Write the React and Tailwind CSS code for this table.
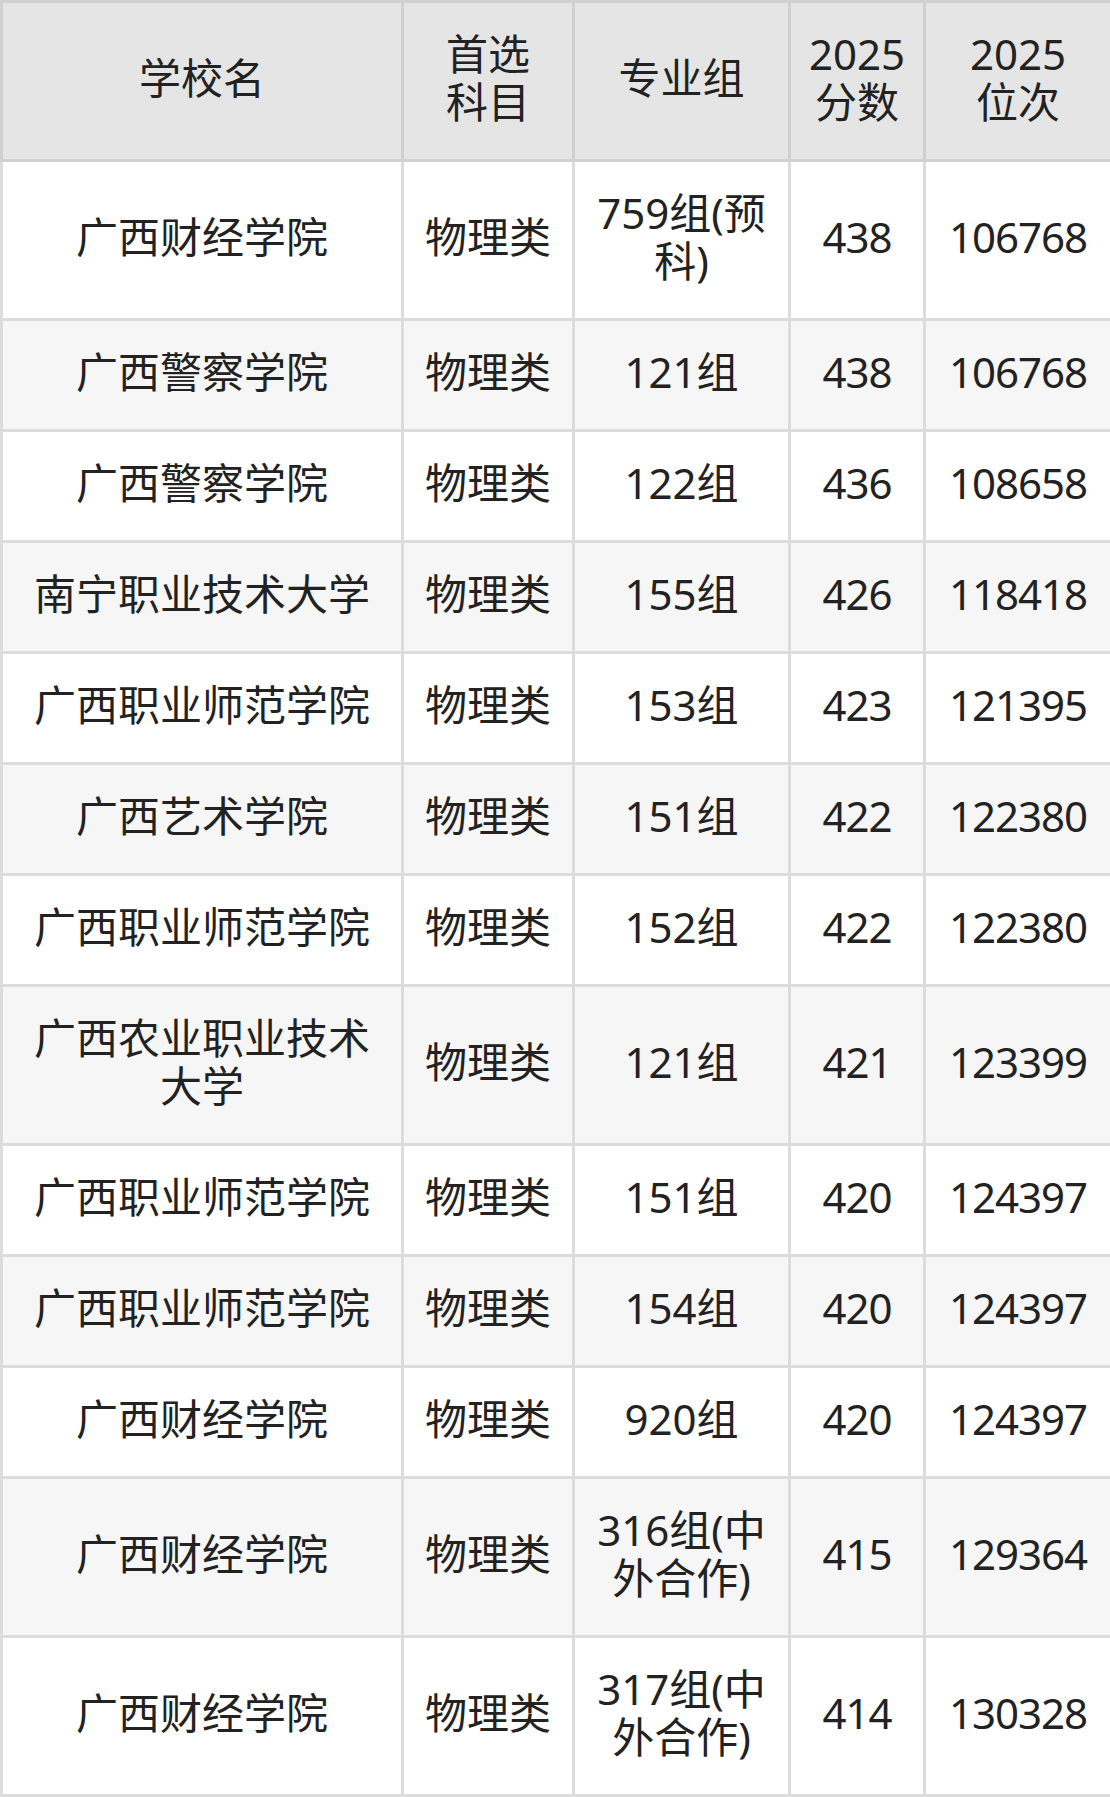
import React from 'react';

const rows = [
  ['广西财经学院', '物理类', '759组(预科)', '438', '106768'],
  ['广西警察学院', '物理类', '121组', '438', '106768'],
  ['广西警察学院', '物理类', '122组', '436', '108658'],
  ['南宁职业技术大学', '物理类', '155组', '426', '118418'],
  ['广西职业师范学院', '物理类', '153组', '423', '121395'],
  ['广西艺术学院', '物理类', '151组', '422', '122380'],
  ['广西职业师范学院', '物理类', '152组', '422', '122380'],
  ['广西农业职业技术大学', '物理类', '121组', '421', '123399'],
  ['广西职业师范学院', '物理类', '151组', '420', '124397'],
  ['广西职业师范学院', '物理类', '154组', '420', '124397'],
  ['广西财经学院', '物理类', '920组', '420', '124397'],
  ['广西财经学院', '物理类', '316组(中外合作)', '415', '129364'],
  ['广西财经学院', '物理类', '317组(中外合作)', '414', '130328'],
];

// cells share 3px grey rules; text sits a touch above centre like the source
const th = 'border-[3px] border-[#d0d0d0] bg-[#e5e5e5] px-4 pt-[27px] pb-[33px] font-normal';
const td = 'border-[3px] border-[#dcdcdc] px-4 pt-[27px] pb-[33px]';

function App() {
  return (
    <div className="w-[1110px] bg-white">
      <table
        className="w-[1110px] table-fixed border-collapse text-center text-[42px] leading-[48px] text-[#222]"
        style={{ fontFamily: '"Noto Sans", "Noto Sans CJK SC", sans-serif' }}
      >
        <colgroup>
          <col className="w-[401px]" />
          <col className="w-[171px]" />
          <col className="w-[216px]" />
          <col className="w-[135px]" />
          <col className="w-[187px]" />
        </colgroup>
        <thead>
          <tr>
            <th className={th}>学校名</th>
            <th className={th}>首选<br />科目</th>
            <th className={th}>专业组</th>
            <th className={th}>2025<br />分数</th>
            <th className={th}>2025<br />位次</th>
          </tr>
        </thead>
        <tbody>
          {rows.map((r, i) => (
            <tr key={i} className={i % 2 === 1 ? 'bg-[#f6f6f6]' : 'bg-white'}>
              {r.map((c, j) => (
                <td key={j} className={j > 2 ? td + ' tracking-[-1px]' : td}>{c}</td>
              ))}
            </tr>
          ))}
        </tbody>
      </table>
    </div>
  );
}

export default App;
